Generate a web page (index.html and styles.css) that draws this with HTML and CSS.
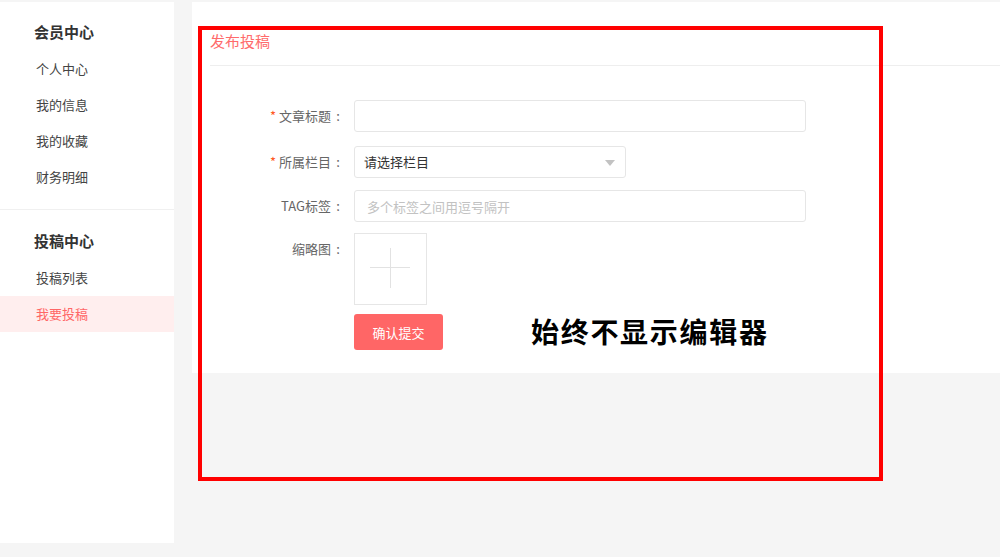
FILE: index.html
```html
<!DOCTYPE html>
<html lang="zh-CN">
<head>
<meta charset="utf-8">
<title>发布投稿</title>
<link rel="stylesheet" href="styles.css">
</head>
<body>
<div class="page">
  <aside class="sidebar">
    <div class="group">
      <h3 class="group-title">会员中心</h3>
      <a class="nav-item">个人中心</a>
      <a class="nav-item">我的信息</a>
      <a class="nav-item">我的收藏</a>
      <a class="nav-item">财务明细</a>
    </div>
    <div class="group group-second">
      <h3 class="group-title">投稿中心</h3>
      <a class="nav-item">投稿列表</a>
      <a class="nav-item active">我要投稿</a>
    </div>
  </aside>
  <main class="main">
    <div class="panel">
      <div class="panel-head">发布投稿</div>
      <form class="form">
        <div class="row row-1">
          <label class="label"><span class="req">*</span> 文章标题<span class="colon">:</span></label>
          <input class="input wide" type="text">
        </div>
        <div class="row row-2">
          <label class="label"><span class="req">*</span> 所属栏目<span class="colon">:</span></label>
          <div class="select">请选择栏目<span class="arrow"></span></div>
        </div>
        <div class="row row-3">
          <label class="label">TAG标签<span class="colon">:</span></label>
          <input class="input wide" type="text" placeholder="多个标签之间用逗号隔开">
        </div>
        <div class="row row-4">
          <label class="label">缩略图<span class="colon">:</span></label>
          <div class="thumb"><span class="plus-h"></span><span class="plus-v"></span></div>
        </div>
        <div class="row">
          <span class="label"></span>
          <button class="btn" type="button">确认提交</button>
        </div>
      </form>
    </div>
  </main>
  <div class="note">始终不显示编辑器</div>
  <div class="annot-box"></div>
</div>
</body>
</html>
```

FILE: styles.css
```css
* { box-sizing: border-box; }
html, body { margin: 0; padding: 0; }
body {
  background: #f5f5f5;
  font-family: "Noto Sans CJK SC", "Noto Sans", "Liberation Sans", sans-serif;
  color: #333;
  width: 1000px;
  height: 557px;
  overflow: hidden;
}
.page {
  position: relative;
  display: flex;
  align-items: flex-start;
  padding-top: 2px;
}
.sidebar {
  width: 174px;
  height: 541px;
  background: #fff;
  flex: none;
}
.group { padding: 18px 0 14px; }
.group-second { border-top: 1px solid #f0f0f0; padding-top: 19px; }
.group-title {
  margin: 0 0 7px 34px;
  font-size: 15px;
  line-height: 24px;
  font-weight: bold;
  color: #333;
}
.nav-item {
  display: block;
  height: 36px;
  line-height: 36px;
  padding-left: 36px;
  font-size: 13px;
  color: #444;
}
.nav-item.active {
  background: #ffeeee;
  color: #ff6666;
}
.main {
  flex: 1;
  margin-left: 18px;
}
.panel {
  background: #fff;
  height: 371px;
}
.panel-head {
  margin-left: 18px;
  padding-top: 27px;
  height: 64px;
  font-size: 15px;
  line-height: 24px;
  color: #ff6b6b;
  border-bottom: 1px solid #eeeeee;
}
.form {
  padding-top: 34px;
  display: flex;
  flex-direction: column;
}
.row {
  display: flex;
  align-items: flex-start;
}
.row-1 { margin-bottom: 14px; }
.row-2 { margin-bottom: 12px; }
.row-3 { margin-bottom: 11px; }
.row-4 { margin-bottom: 9px; }
.label {
  width: 153px;
  flex: none;
  text-align: right;
  font-size: 13px;
  line-height: 32px;
  color: #666;
  margin-right: 9px;
}
.colon {
  display: inline-block;
  width: 14px;
  text-align: center;
}
.req { color: #ff5722; }
.input {
  height: 32px;
  border: 1px solid #e6e6e6;
  border-radius: 3px;
  padding: 0 12px;
  font-size: 13px;
  font-family: inherit;
  outline: none;
}
.input::placeholder { color: #c2c2c2; }
.wide { width: 452px; }
.select {
  position: relative;
  width: 272px;
  height: 32px;
  line-height: 30px;
  border: 1px solid #e6e6e6;
  border-radius: 3px;
  padding-left: 9px;
  font-size: 13px;
  color: #333;
}
.arrow {
  position: absolute;
  right: 10px;
  top: 13px;
  width: 0;
  height: 0;
  border-left: 5px solid transparent;
  border-right: 5px solid transparent;
  border-top: 6px solid #c2c2c2;
}
.thumb {
  position: relative;
  width: 73px;
  height: 72px;
  border: 1px solid #e6e6e6;
}
.plus-h {
  position: absolute;
  left: 15px;
  top: 33px;
  width: 40px;
  height: 1px;
  background: #e2e2e2;
}
.plus-v {
  position: absolute;
  left: 35px;
  top: 14px;
  width: 1px;
  height: 40px;
  background: #e2e2e2;
}
.btn {
  width: 89px;
  height: 36px;
  border: none;
  border-radius: 3px;
  background: #ff6666;
  color: #fff;
  font-size: 13px;
  font-family: inherit;
  padding: 0;
}
.note {
  position: absolute;
  left: 531px;
  top: 312px;
  font-size: 28px;
  line-height: 38px;
  font-weight: bold;
  color: #000;
  letter-spacing: 1.7px;
}
.annot-box {
  position: absolute;
  left: 198px;
  top: 26px;
  width: 685px;
  height: 455px;
  border: 4px solid #ff0000;
  pointer-events: none;
}
```
